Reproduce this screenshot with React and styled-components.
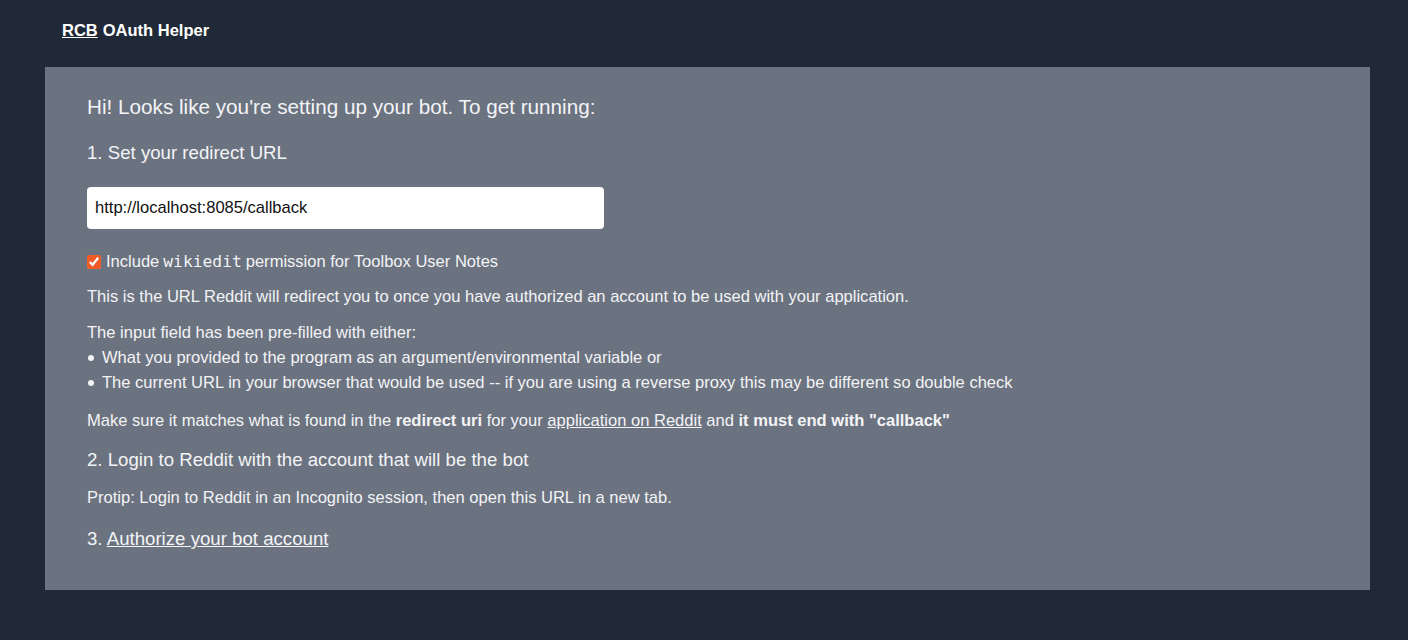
import React, { useState } from 'react';
import styled, { createGlobalStyle } from 'styled-components';

const GlobalStyle = createGlobalStyle`
  html, body {
    margin: 0;
    padding: 0;
    background: #1f2937;
  }
  body {
    font-family: "Liberation Sans", Arial, sans-serif;
    color: #f3f4f6;
  }
`;

const Page = styled.div`
  min-height: 640px;
  background: #1f2937;
`;

const Header = styled.header`
  height: 61px;
  margin-bottom: 6px;
  padding-left: 62px;
  display: flex;
  align-items: center;
  font-family: "Liberation Sans", Arial, sans-serif;
  font-weight: 700;
  font-size: 16.5px;
  color: #ffffff;
  a {
    color: #ffffff;
    text-decoration: underline;
    margin-right: 5px;
  }
`;

const Panel = styled.main`
  margin: 0 38px 0 45px;
  background: #6b7280;
  padding: 26px 42px 38px;
  display: flex;
  flex-direction: column;
  align-items: flex-start;
`;

const Title = styled.h1`
  margin: 0;
  font-size: 20.7px;
  line-height: 28px;
  font-weight: 400;
`;

const Step = styled.h2`
  margin: ${p => p.$top || 0}px 0 0;
  font-size: 18.65px;
  line-height: 26px;
  font-weight: 400;
  a {
    color: inherit;
    text-decoration: underline;
  }
`;

const UrlInput = styled.input`
  margin-top: 21px;
  width: 517px;
  height: 42px;
  box-sizing: border-box;
  border: none;
  border-radius: 4px;
  padding: 0 8px;
  background: #ffffff;
  color: #111111;
  font-family: "Liberation Sans", Arial, sans-serif;
  font-size: 16.55px;
  outline: none;
`;

const CheckRow = styled.label`
  margin-top: 21px;
  display: flex;
  align-items: center;
  font-size: 16.55px;
  line-height: 24px;
  input {
    margin: 0 5px 0 0;
    width: 14px;
    height: 14px;
    accent-color: #f05a24;
  }
  code {
    font-family: "DejaVu Sans Mono", "Liberation Mono", monospace;
    font-size: 16.3px;
    margin: 0 4px;
  }
`;

const Text = styled.p`
  margin: ${p => p.$top || 0}px 0 0;
  font-size: 16.55px;
  line-height: ${p => p.$lh || 24}px;
  b {
    font-weight: 700;
  }
  a {
    color: inherit;
    text-decoration: underline;
  }
`;

const Block = styled.div`
  margin-top: 11px;
  line-height: 25px;
`;

const Bullets = styled.ul`
  margin: 0;
  padding: 0;
  list-style: none;
`;

const Bullet = styled.li`
  position: relative;
  padding-left: 15px;
  font-size: 16.55px;
  line-height: 25px;
  &::before {
    content: "";
    position: absolute;
    left: 1px;
    top: 10px;
    width: 6px;
    height: 6px;
    border-radius: 50%;
    background: #f3f4f6;
  }
`;

export default function App() {
  const [url, setUrl] = useState('http://localhost:8085/callback');
  const [wiki, setWiki] = useState(true);

  return (
    <Page>
      <GlobalStyle />
      <Header>
        <a href="#">RCB</a> OAuth Helper
      </Header>
      <Panel>
        <Title>Hi! Looks like you're setting up your bot. To get running:</Title>
        <Step $top={19}>1. Set your redirect URL</Step>
        <UrlInput value={url} onChange={e => setUrl(e.target.value)} />
        <CheckRow>
          <input type="checkbox" checked={wiki} onChange={e => setWiki(e.target.checked)} />
          Include <code>wikiedit</code> permission for Toolbox User Notes
        </CheckRow>
        <Text $top={11}>
          This is the URL Reddit will redirect you to once you have authorized an account to be used with your application.
        </Text>
        <Block>
          <Text $lh={25}>The input field has been pre-filled with either:</Text>
          <Bullets>
            <Bullet>What you provided to the program as an argument/environmental variable or</Bullet>
            <Bullet>The current URL in your browser that would be used -- if you are using a reverse proxy this may be different so double check</Bullet>
          </Bullets>
        </Block>
        <Text $top={14}>
          Make sure it matches what is found in the <b>redirect uri</b> for your <a href="#">application on Reddit</a> and <b>it must end with "callback"</b>
        </Text>
        <Step $top={14}>2. Login to Reddit with the account that will be the bot</Step>
        <Text $top={13}>Protip: Login to Reddit in an Incognito session, then open this URL in a new tab.</Text>
        <Step $top={16}>
          3. <a href="#">Authorize your bot account</a>
        </Step>
      </Panel>
    </Page>
  );
}
